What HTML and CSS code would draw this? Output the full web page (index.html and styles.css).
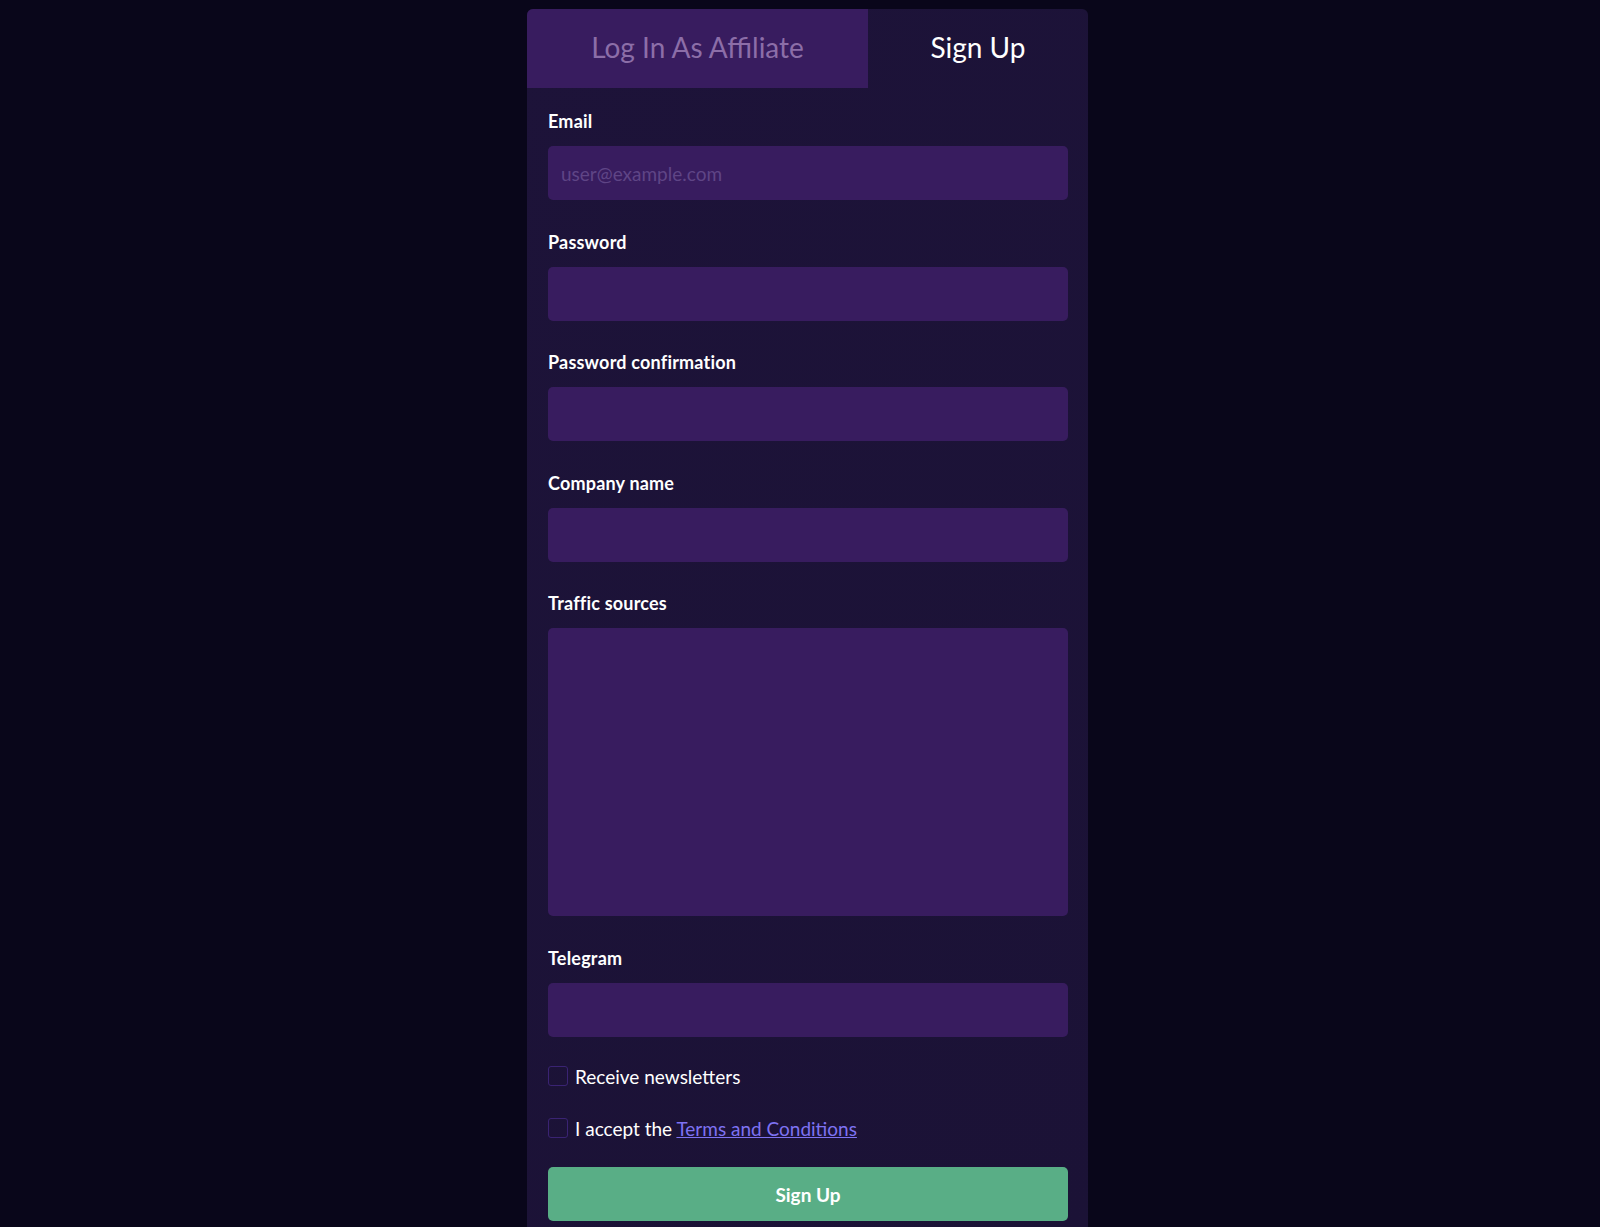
FILE: index.html
```html
<!DOCTYPE html>
<html lang="en">
<head>
  <meta charset="UTF-8" />
  <meta name="viewport" content="width=device-width, initial-scale=1.0" />
  <title>Affiliate Sign Up</title>
  <link rel="stylesheet" href="styles.css">
</head>
<body>
  <div class="card">
    <div class="tabs">
      <a class="tab" href="#">Log In As Affiliate</a>
      <a class="tab active" href="#">Sign Up</a>
    </div>

    <form class="signup" onsubmit="event.preventDefault()">
      <div class="field">
        <label for="email">Email</label>
        <input id="email" type="email" placeholder="user@example.com" />
      </div>
      <div class="field">
        <label for="password">Password</label>
        <input id="password" type="password" />
      </div>
      <div class="field">
        <label for="confirm">Password confirmation</label>
        <input id="confirm" type="password" />
      </div>
      <div class="field">
        <label for="company">Company name</label>
        <input id="company" type="text" />
      </div>
      <div class="field field-big">
        <label for="traffic">Traffic sources</label>
        <textarea id="traffic"></textarea>
      </div>
      <div class="field field-last">
        <label for="telegram">Telegram</label>
        <input id="telegram" type="text" />
      </div>

      <label class="check">
        <input type="checkbox" />
        <span>Receive newsletters</span>
      </label>
      <label class="check">
        <input type="checkbox" />
        <span>I accept the <a href="#">Terms and Conditions</a></span>
      </label>

      <button type="submit">Sign Up</button>
    </form>
  </div>
</body>
</html>
```

FILE: styles.css
```css
/* Fundo */
body {
  margin: 0;
  background-color: #09061a;
  font-family: Lato, "Open Sans", sans-serif;
  color: #fff;
}

/* Cartao principal */
.card {
  width: 561px;
  margin: 9px 0 0 527px;
  background: linear-gradient(135deg, #1d1339, #1b1236);
  border-radius: 6px 6px 0 0;
  overflow: hidden;
}

/* Abas */
.tabs {
  display: flex;
  height: 79px;
}
.tab {
  display: flex;
  align-items: center;
  justify-content: center;
  text-decoration: none;
  font-size: 28px;
  color: #fff;
  padding-bottom: 4px;
  box-sizing: border-box;
}
.tab:first-child {
  width: 341px;
  background-color: #381c5f;
  color: #8c6ea8;
}
.tab.active {
  flex: 1;
}

/* Formulario */
.signup {
  display: flex;
  flex-direction: column;
  padding: 23px 20px 20px 21px;
}
.field {
  display: flex;
  flex-direction: column;
  margin-bottom: 31.5px;
}
.field label {
  font-weight: 700;
  font-size: 18px;
  letter-spacing: 0.2px;
  line-height: 20px;
  margin-bottom: 15px;
}
.field input,
.field textarea {
  height: 54px;
  box-sizing: border-box;
  border: none;
  border-radius: 5px;
  background-color: #381c5f;
  color: #fff;
  padding: 0 13px;
  font-family: inherit;
  font-size: 19px;
  outline: none;
}
.field textarea {
  height: 288px;
  resize: none;
  padding: 13px;
}
.field input::placeholder {
  color: #5f4586;
}
.field-big {
  margin-bottom: 32px;
}
.field-last {
  margin-bottom: 27px;
}

/* Caixas de selecao */
.check {
  display: flex;
  align-items: center;
  gap: 7px;
  height: 24px;
  font-size: 19px;
  margin-bottom: 28px;
}
.check input {
  appearance: none;
  margin: 0;
  width: 20px;
  height: 20px;
  border: 1.5px solid #3a2373;
  border-radius: 3px;
  box-sizing: border-box;
}
.check a {
  color: #7e72f2;
}
.check:last-of-type {
  margin-bottom: 27px;
}

/* Botao */
button {
  height: 54px;
  border: none;
  border-radius: 5px;
  background-color: #59ae86;
  color: #fff;
  font-family: inherit;
  font-weight: 700;
  font-size: 19px;
}
```
